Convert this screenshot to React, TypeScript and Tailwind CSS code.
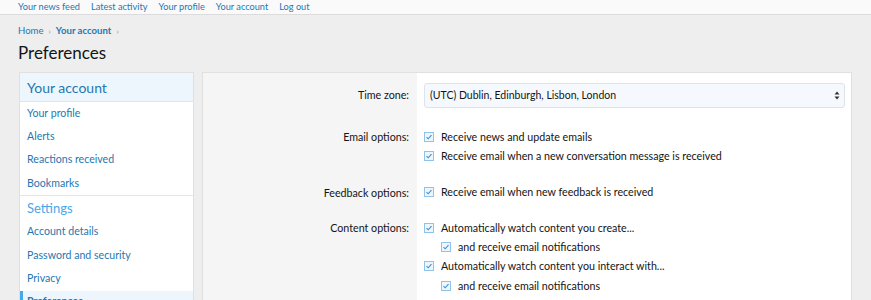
import React from "react";

const font = { fontFamily: 'Lato, "Noto Sans", sans-serif' };

function Check() {
  return (
    <span className="inline-flex h-[10px] w-[10px] shrink-0 items-center justify-center border border-[#8fc3ea] bg-[#eef6fd]">
      <svg width="8" height="8" viewBox="0 0 8 8">
        <path d="M1.5 4.2 L3.2 5.8 L6.5 2.2" fill="none" stroke="#3d8fd0" strokeWidth="1.1" />
      </svg>
    </span>
  );
}

function CheckRow({ text, nested = false }: { text: string; nested?: boolean }) {
  return (
    <div className={`flex h-[19.33px] items-center ${nested ? "pl-[17px]" : ""}`}>
      <Check />
      <span className="ml-[7px] whitespace-nowrap text-[10.7px] text-[#141414]">{text}</span>
    </div>
  );
}

function Row({ label, children, mt }: { label: string; children: React.ReactNode; mt: string }) {
  return (
    <div className={`flex ${mt}`}>
      <div className="w-[215px] shrink-0 pr-[9px] text-right text-[10.7px] leading-[19.33px] text-[#141414]">{label}</div>
      <div className="flex-1 pl-[6px] pr-[6px]">{children}</div>
    </div>
  );
}

export default function App() {
  return (
    <div className="h-[300px] w-[871px] overflow-hidden bg-[#eeeeee]" style={font}>
      <div className="flex h-[15px] items-center gap-[11px] border-b border-[#dcdcdc] bg-[#fafafa] pl-[18px] text-[9.2px] text-[#2577b1]">
        <span>Your news feed</span>
        <span>Latest activity</span>
        <span>Your profile</span>
        <span>Your account</span>
        <span>Log out</span>
      </div>
      <div className="pl-[18px]">
        <div className="mt-[9px] flex h-[14px] items-center text-[9.6px] text-[#2577b1]">
          <span>Home</span>
          <span className="mx-[5px] text-[8px] text-[#8c8c8c]">›</span>
          <span className="font-bold">Your account</span>
          <span className="mx-[5px] text-[8px] text-[#8c8c8c]">›</span>
        </div>
        <div className="mt-[3px] text-[17px] leading-[24px] text-[#141414]">Preferences</div>
      </div>
      <div className="mt-[7px] flex pl-[19px]">
        <div className="w-[175px] shrink-0 border border-[#e0e0e0] bg-white">
          <div className="flex h-[29px] items-center border-b border-[#dfe6ec] bg-[#edf6fd] pl-[7px] text-[14px] text-[#2577b1]">Your account</div>
          {["Your profile", "Alerts", "Reactions received", "Bookmarks"].map((t) => (
            <div key={t} className="flex h-[23.3px] items-center pl-[7px] text-[10.6px] text-[#2577b1]">{t}</div>
          ))}
          <div className="flex h-[25.5px] items-center border-t border-[#e6e6e6] pl-[7px] text-[13px] text-[#47a7eb]">Settings</div>
          {["Account details", "Password and security", "Privacy"].map((t) => (
            <div key={t} className="flex h-[23.3px] items-center pl-[7px] text-[10.6px] text-[#2577b1]">{t}</div>
          ))}
          <div className="flex h-[23.3px] items-center border-l-[3px] border-[#47a7eb] bg-[#edf6fd] pl-[4px] text-[10.6px] font-bold text-[#2577b1]">Preferences</div>
        </div>
        <div className="ml-[8px] w-[650px] shrink-0 border border-[#e0e0e0] bg-white">
          <div className="flex h-[240px] flex-col bg-[linear-gradient(to_right,#f5f5f5_0,#f5f5f5_214px,#ffffff_214px)]">
            <div className="flex pt-[10px]">
              <div className="flex h-[25px] w-[215px] shrink-0 items-center justify-end pr-[9px] text-[10.7px] text-[#141414]">Time zone:</div>
              <div className="flex-1 pl-[6px] pr-[6px]">
                <div className="flex h-[25px] items-center justify-between rounded-[3px] border border-[#dde3e8] bg-[#f5f9fd] pl-[5px] pr-[4px] text-[10.5px] text-[#141414]">
                  <span>(UTC) Dublin, Edinburgh, Lisbon, London</span>
                  <svg width="6" height="9" viewBox="0 0 6 9">
                    <path d="M3 0.5 L5.5 3.5 L0.5 3.5 Z M3 8.5 L5.5 5.5 L0.5 5.5 Z" fill="#333" />
                  </svg>
                </div>
              </div>
            </div>
            <Row label="Email options:" mt="mt-[19px]">
              <CheckRow text="Receive news and update emails" />
              <CheckRow text="Receive email when a new conversation message is received" />
            </Row>
            <Row label="Feedback options:" mt="mt-[17px]">
              <CheckRow text="Receive email when new feedback is received" />
            </Row>
            <Row label="Content options:" mt="mt-[16px]">
              <CheckRow text="Automatically watch content you create..." />
              <CheckRow text="and receive email notifications" nested />
              <CheckRow text="Automatically watch content you interact with..." />
              <CheckRow text="and receive email notifications" nested />
              <CheckRow text="Show your online status" />
            </Row>
          </div>
        </div>
      </div>
    </div>
  );
}
